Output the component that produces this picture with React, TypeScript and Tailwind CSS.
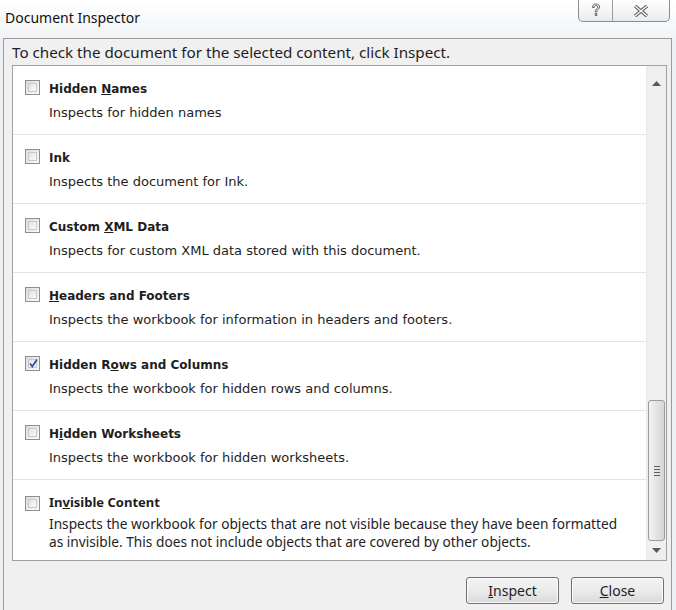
import React from "react";

const segoe = { fontFamily: '"Noto Sans", "Open Sans", sans-serif' };
const tahoma = { fontFamily: '"DejaVu Sans", Verdana, sans-serif' };

function Checkbox({ checked }: { checked?: boolean }) {
  return (
    <div className="relative w-[15px] h-[15px] shrink-0 border border-[#8e8f8f] bg-gradient-to-br from-[#dcdcdc] to-[#fbfbfb] p-[2px]">
      <div className="w-full h-full border border-[#c8c8c8] bg-gradient-to-br from-[#e2e2e2] to-[#fafafa]" />
      {checked && (
        <svg className="absolute left-[2px] top-[1px]" width="11" height="11" viewBox="0 0 11 11">
          <path d="M2 5.5 L4.3 8.5 L9 1.5" fill="none" stroke="#2d4fa0" strokeWidth="1.7" />
        </svg>
      )}
    </div>
  );
}

type Item = {
  title: React.ReactNode;
  desc: React.ReactNode;
  checked?: boolean;
};

const items: Item[] = [
  { title: <>Hidden <u>N</u>ames</>, desc: "Inspects for hidden names" },
  { title: <>Ink</>, desc: "Inspects the document for Ink." },
  { title: <>Custom <u>X</u>ML Data</>, desc: "Inspects for custom XML data stored with this document." },
  { title: <><u>H</u>eaders and Footers</>, desc: "Inspects the workbook for information in headers and footers." },
  { title: <>Hidden R<u>o</u>ws and Columns</>, desc: "Inspects the workbook for hidden rows and columns.", checked: true },
  { title: <>H<u>i</u>dden Worksheets</>, desc: "Inspects the workbook for hidden worksheets." },
];

function Row({ item }: { item: Item }) {
  return (
    <div className="h-[69px] border-b border-[#e3e3e3] flex pl-[12px] pt-[14px]">
      <Checkbox checked={item.checked} />
      <div className="ml-[9px]">
        <div className="text-[12px] font-bold text-[#1e1e1e] leading-[18px]" style={tahoma}>
          {item.title}
        </div>
        <div className="text-[13px] text-[#1e1e1e] leading-[18px] mt-[6px]" style={tahoma}>
          {item.desc}
        </div>
      </div>
    </div>
  );
}

function Scrollbar() {
  return (
    <div className="w-[20px] shrink-0 bg-[#efefef] border-l border-[#e8e8e8] flex flex-col items-center">
      <div className="h-[34px] w-full flex items-center justify-center">
        <svg width="9" height="5" viewBox="0 0 9 5">
          <path d="M0 5 L4.5 0 L9 5 Z" fill="#5a5a5a" />
        </svg>
      </div>
      <div className="flex-1" />
      <div className="w-[17px] h-[141px] rounded-[3px] border border-[#9b9b9b] bg-gradient-to-r from-[#f2f2f2] via-[#e4e4e4] to-[#d6d6d6] flex flex-col items-center justify-center gap-[2px]">
        <div className="w-[6px] h-[1px] bg-[#606060]" />
        <div className="w-[6px] h-[1px] bg-[#606060]" />
        <div className="w-[6px] h-[1px] bg-[#606060]" />
        <div className="w-[6px] h-[1px] bg-[#606060]" />
      </div>
      <div className="h-[19px] w-full flex items-center justify-center">
        <svg width="9" height="5" viewBox="0 0 9 5">
          <path d="M0 0 L4.5 5 L9 0 Z" fill="#5a5a5a" />
        </svg>
      </div>
    </div>
  );
}

function Button({ children }: { children: React.ReactNode }) {
  return (
    <div
      className="w-[93px] h-[27px] rounded-[3px] border border-[#707070] bg-gradient-to-b from-[#f4f4f4] via-[#ebebeb] to-[#d9d9d9] flex items-center justify-center text-[14px] text-[#1e1e1e] shadow-[inset_0_0_0_1px_#fcfcfc]"
      style={segoe}
    >
      {children}
    </div>
  );
}

export default function App() {
  return (
    <div className="w-[676px] h-[610px] bg-[#eef1f4] overflow-hidden flex flex-col relative">
      {/* title bar */}
      <div className="h-[38px] shrink-0 flex items-start justify-between bg-gradient-to-b from-[#ffffff] to-[#f1f3f6]">
        <div className="pl-[5px] pt-[7px] text-[14px] text-[#111]" style={segoe}>
          Document Inspector
        </div>
        <div className="mr-[6px] flex h-[22px] border border-t-0 border-[#8c8c8c] rounded-b-[5px] bg-gradient-to-b from-[#ffffff] to-[#e9ebee] overflow-hidden">
          <div className="w-[34px] flex items-center justify-center border-r border-[#9c9c9c]">
            <svg width="10" height="15" viewBox="0 0 10 15">
              <path
                d="M1.5 4.5 C1.5 2 3 1 5 1 C7.3 1 8.5 2.3 8.5 4 C8.5 6.2 5.8 6.6 5.8 9 L4.2 9 C4.2 6 6.8 5.6 6.8 4 C6.8 3.1 6.1 2.5 5 2.5 C3.8 2.5 3.2 3.3 3.2 4.5 Z M4.2 10.5 L5.8 10.5 L5.8 12.5 L4.2 12.5 Z"
                fill="#fafafa"
                stroke="#555"
                strokeWidth="0.9"
              />
            </svg>
          </div>
          <div className="w-[56px] flex items-center justify-center">
            <svg width="16" height="12" viewBox="0 0 16 12">
              <path d="M2 1 L14 11 M14 1 L2 11" stroke="#555" strokeWidth="3.4" />
              <path d="M2 1 L14 11 M14 1 L2 11" stroke="#f6f6f6" strokeWidth="1.6" />
            </svg>
          </div>
        </div>
      </div>
      {/* body */}
      <div className="flex-1 ml-[3px] mr-[4px] border-l border-t border-r border-[#9a9a9a] bg-[#f0f0f0] flex flex-col">
        <div className="h-[26px] pl-[8px] pt-[2px] text-[15.2px] text-[#1e1e1e]" style={segoe}>
          To check the document for the selected content, click Inspect.
        </div>
        <div className="ml-[8px] mr-[4px] h-[496px] border border-[#a0a0a0] bg-white flex">
          <div className="flex-1 flex flex-col overflow-hidden">
            {items.map((it, i) => (
              <Row key={i} item={it} />
            ))}
            <div className="flex pl-[12px] pt-[16px]">
              <Checkbox />
              <div className="ml-[9px] -mt-[3px]">
                <div className="text-[13px] font-bold text-[#1e1e1e] leading-[18px]" style={segoe}>
                  In<u>v</u>isible Content
                </div>
                <div className="text-[13.7px] text-[#1e1e1e] leading-[18px] mt-[4px]" style={segoe}>
                  Inspects the workbook for objects that are not visible because they have been formatted
                  <br />
                  as invisible. This does not include objects that are covered by other objects.
                </div>
              </div>
            </div>
          </div>
          <Scrollbar />
        </div>
        <div className="flex justify-end gap-[12px] pr-[7px] pt-[16px]">
          <Button>
            <u>I</u>nspect
          </Button>
          <Button>
            <u>C</u>lose
          </Button>
        </div>
      </div>
    </div>
  );
}
